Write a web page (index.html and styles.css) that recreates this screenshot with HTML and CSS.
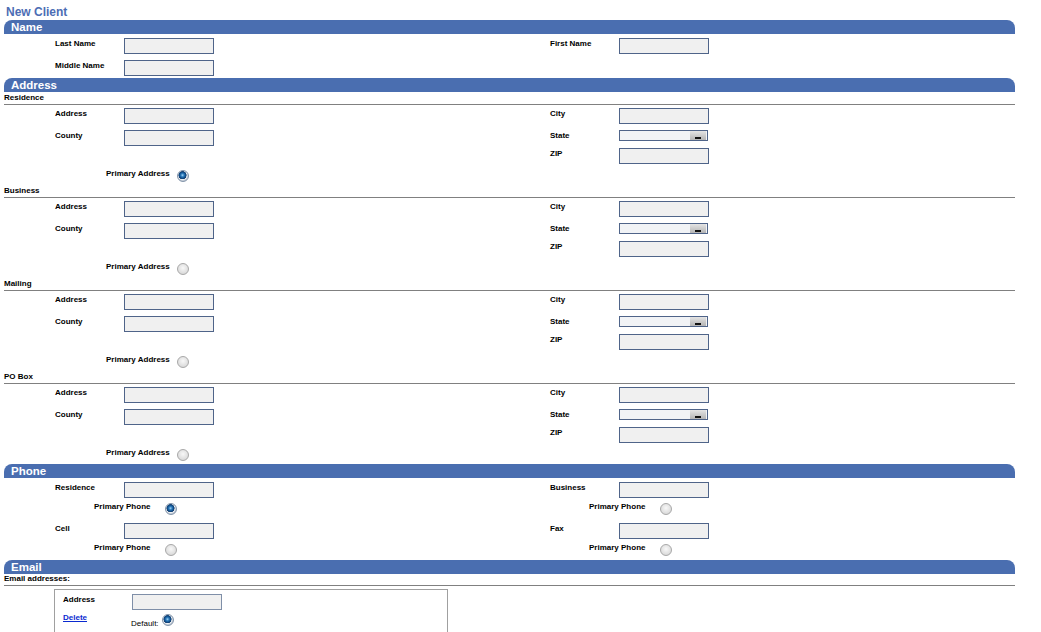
FILE: index.html
```html
<!DOCTYPE html>
<html lang="en">
<head>
    <meta charset="UTF-8">
    <title>New Client</title>
    <link rel="stylesheet" href="styles.css">
</head>
<body>
<div class="page">
    <h1 class="title">New Client</h1>

    <div class="bar">Name</div>
    <div class="cols name">
        <div class="col">
            <div class="row"><label>Last Name</label><input class="field" type="text"></div>
            <div class="row short"><label>Middle Name</label><input class="field" type="text"></div>
        </div>
        <div class="col">
            <div class="row"><label>First Name</label><input class="field" type="text"></div>
        </div>
    </div>

    <div class="bar">Address</div>

    <div class="block">
        <div class="sub">Residence</div>
        <div class="cols">
            <div class="col">
                <div class="row"><label>Address</label><input class="field" type="text"></div>
                <div class="row"><label>County</label><input class="field" type="text"></div>
            </div>
            <div class="col">
                <div class="row"><label>City</label><input class="field" type="text"></div>
                <div class="row sel"><label>State</label><span class="select"><span class="drop"></span></span></div>
                <div class="row"><label>ZIP</label><input class="field" type="text"></div>
            </div>
        </div>
        <div class="primary"><label>Primary Address</label><span class="radio checked"></span></div>
    </div>

    <div class="block">
        <div class="sub">Business</div>
        <div class="cols">
            <div class="col">
                <div class="row"><label>Address</label><input class="field" type="text"></div>
                <div class="row"><label>County</label><input class="field" type="text"></div>
            </div>
            <div class="col">
                <div class="row"><label>City</label><input class="field" type="text"></div>
                <div class="row sel"><label>State</label><span class="select"><span class="drop"></span></span></div>
                <div class="row"><label>ZIP</label><input class="field" type="text"></div>
            </div>
        </div>
        <div class="primary"><label>Primary Address</label><span class="radio"></span></div>
    </div>

    <div class="block">
        <div class="sub">Mailing</div>
        <div class="cols">
            <div class="col">
                <div class="row"><label>Address</label><input class="field" type="text"></div>
                <div class="row"><label>County</label><input class="field" type="text"></div>
            </div>
            <div class="col">
                <div class="row"><label>City</label><input class="field" type="text"></div>
                <div class="row sel"><label>State</label><span class="select"><span class="drop"></span></span></div>
                <div class="row"><label>ZIP</label><input class="field" type="text"></div>
            </div>
        </div>
        <div class="primary"><label>Primary Address</label><span class="radio"></span></div>
    </div>

    <div class="block">
        <div class="sub">PO Box</div>
        <div class="cols">
            <div class="col">
                <div class="row"><label>Address</label><input class="field" type="text"></div>
                <div class="row"><label>County</label><input class="field" type="text"></div>
            </div>
            <div class="col">
                <div class="row"><label>City</label><input class="field" type="text"></div>
                <div class="row sel"><label>State</label><span class="select"><span class="drop"></span></span></div>
                <div class="row"><label>ZIP</label><input class="field" type="text"></div>
            </div>
        </div>
        <div class="primary"><label>Primary Address</label><span class="radio"></span></div>
    </div>

    <div class="bar">Phone</div>
    <div class="cols phone">
        <div class="col">
            <div class="row ph"><label>Residence</label><input class="field" type="text"></div>
            <div class="prow"><label>Primary Phone</label><span class="radio checked"></span></div>
            <div class="row ph"><label>Cell</label><input class="field" type="text"></div>
            <div class="prow last"><label>Primary Phone</label><span class="radio"></span></div>
        </div>
        <div class="col">
            <div class="row ph"><label>Business</label><input class="field" type="text"></div>
            <div class="prow"><label>Primary Phone</label><span class="radio"></span></div>
            <div class="row ph"><label>Fax</label><input class="field" type="text"></div>
            <div class="prow last"><label>Primary Phone</label><span class="radio"></span></div>
        </div>
    </div>

    <div class="bar">Email</div>
    <div class="sub email-sub">Email addresses:</div>
    <div class="email-box">
        <div class="erow"><label>Address</label><input class="field light" type="text"></div>
        <div class="erow second">
            <a class="delete" href="#">Delete</a>
            <span class="default">Default:</span>
            <span class="radio checked"></span>
        </div>
    </div>
</div>
</body>
</html>
```

FILE: styles.css
```css
body { margin: 0; background: #fff; font-family: "Liberation Sans", Arial, sans-serif; color: #000; }
.page { width: 1011px; margin-left: 4px; padding-top: 5px; }
.title { margin: 0 0 1px 2px; font-size: 12px; line-height: 14px; font-weight: bold; color: #4c6db4; }

.bar { height: 14px; line-height: 14px; background: #4a6eb0; color: #fff; font-size: 11.5px; font-weight: bold; padding-left: 7px; border-radius: 8px 8px 0 0; }

.cols { display: grid; grid-template-columns: 495px 1fr; padding-left: 51px; }
.cols.name { padding-top: 4px; }
.cols.phone { padding-top: 4px; }

label { font-size: 8px; font-weight: bold; line-height: 10px; }
.row { display: flex; height: 22px; }
.row.short { height: 18px; }
.row.sel { height: 18px; }
.row.ph { height: 21px; }
.row label { width: 69px; flex: none; padding-top: 1px; }

.field { box-sizing: border-box; width: 90px; height: 16px; margin: 0; padding: 0; border: 1px solid #4f6489; background: #f0f0f0; }
.field.light { border-color: #7f8fa8; }

.select { position: relative; box-sizing: border-box; width: 89px; height: 11px; border: 1px solid #4f6489; background: #f1f3f6; }
.select .drop { position: absolute; right: 1px; top: 0; width: 16px; height: 9px; background: linear-gradient(#e4e4e4, #b4b4b4); }
.select .drop::after { content: ""; position: absolute; left: 5px; bottom: 1px; width: 6px; height: 2px; background: #111; }

.sub { font-size: 8px; font-weight: bold; line-height: 10px; padding-bottom: 2px; border-bottom: 1px solid #808080; }
.block .sub { padding-top: 1px; padding-bottom: 1px; }
.block .cols { margin-top: 3px; height: 62px; }
.primary { display: flex; height: 15px; padding-left: 102px; }
.primary label, .prow label { width: 71px; flex: none; margin-top: -1px; }

.prow { display: flex; height: 20px; padding-left: 39px; }
.prow.last { height: 16px; }

.radio { box-sizing: border-box; width: 12px; height: 12px; border-radius: 50%; border: 1px solid #a8a8a8; background: radial-gradient(circle at 50% 40%, #f8f8f8, #d0d0d0); flex: none; }
.radio.checked { border-color: #8294aa; background: radial-gradient(circle at 45% 42%, #a8d6f4 0, #2f7fc0 1.5px, #0f4d8a 3px, #143f70 3.8px, #eef1f4 4.3px, #c2cad4 5.5px); }

.email-sub { padding-bottom: 1px; }
.email-box { box-sizing: border-box; width: 394px; height: 60px; margin: 3px 0 0 50px; border: 1px solid #a0a0a0; padding: 4px 0 0 8px; }
.erow { display: flex; height: 16px; }
.erow label { width: 69px; flex: none; padding-top: 1px; }
.erow.second { margin-top: 2px; height: 20px; }
.delete { width: 68px; flex: none; padding-top: 1px; font-size: 8px; font-weight: bold; line-height: 10px; color: #0a2ad0; text-decoration: underline; }
.default { font-size: 8px; line-height: 10px; margin-top: 7px; margin-right: 3px; }
.erow .radio { margin-top: 2px; }
```
